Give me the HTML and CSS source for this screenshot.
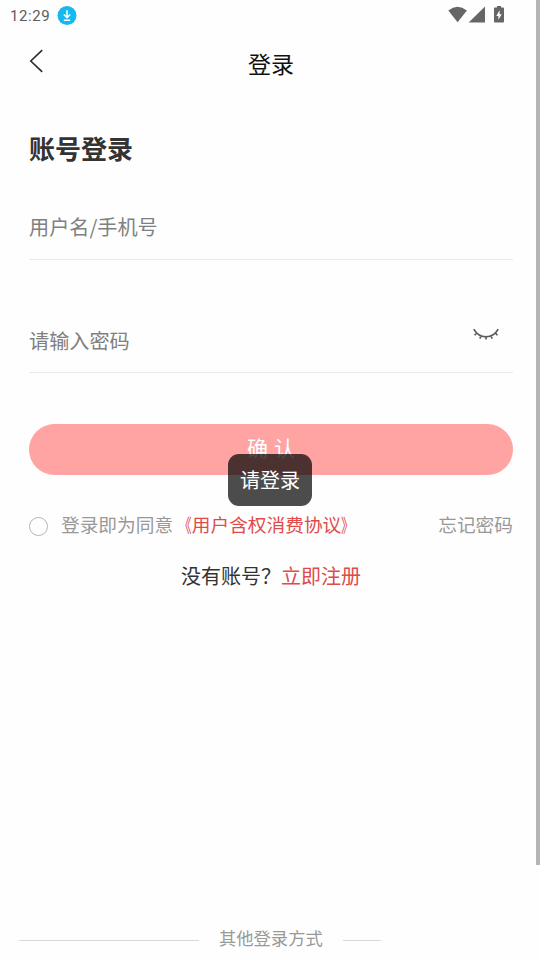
FILE: index.html
```html
<!DOCTYPE html>
<html lang="zh-CN">
<head>
<meta charset="utf-8">
<title>登录</title>
<link rel="stylesheet" href="styles.css">
</head>
<body>
<div class="screen">
  <div class="status">
    <span class="time">12:29</span>
    <svg class="download" width="20" height="20" viewBox="0 0 20 20"><circle cx="10" cy="9.500" r="9.5" fill="#14b9f0"/><path d="M10 4.300v7M6.800 8.500l3.200 3.200L13.200 8.500M6.800 14.200h6.400" fill="none" stroke="#fff" stroke-width="1.6"/></svg>
    <svg class="signals" width="58" height="18" viewBox="0 0 58 18"><g fill="#666"><path d="M0.3 4.4Q9.5-3 18.9 4.4L9.6 16.3z"/><path d="M37 .5V16.6H20.7z"/><path d="M49 0h4v1.5h2.2q.8 0 .8.8v13.5q0 .8-.8.8h-8.4q-.8 0-.8-.8V2.300q0-.8.8-.8H49z"/></g><path d="M51.600 4.300L48.300 9.900H50.400V13.800L53.700 8.200H51.600z" fill="#fff"/></svg>
  </div>
  <header class="nav">
    <svg class="back" width="16" height="24" viewBox="0 0 16 24"><path d="M13.200 1.200L1.800 12 13.200 22.800" fill="none" stroke="#2b2b2b" stroke-width="1.6"/></svg>
    <span class="title">登录</span>
  </header>
  <main class="form">
    <h1>账号登录</h1>
    <div class="field account">用户名/手机号</div>
    <div class="field password"><span>请输入密码</span>
      <svg class="eye" width="28" height="16" viewBox="0 0 28 16"><path d="M1.800 2.200Q6 9.800 14 9.800T26.200 2.200M4.600 6L2.600 8.300M9 8.800L7.900 11.600M14 9.800V12.600M19 8.800L20.100 11.600M23.400 6L25.400 8.300" fill="none" stroke="#5c5c5c" stroke-width="1.7"/></svg>
    </div>
    <div class="submit"><span class="label">确 认</span><div class="toast">请登录</div></div>
    <div class="agreement">
      <span class="radio"></span>
      <span>登录即为同意<span class="link"><span class="open">《</span>用户含权消费协议<span class="close">》</span></span></span>
      <span class="forgot">忘记密码</span>
    </div>
    <div class="register">没有账号？<span class="link">立即注册</span></div>
  </main>
  <footer class="other"><i class="rule"></i><span>其他登录方式</span><i class="rule short"></i></footer>
  <div class="scrollbar"></div>
</div>
</body>
</html>
```
FILE: styles.css
```css
* { box-sizing: border-box; }
body { margin: 0; background: #fefefe; font-family: "Noto Sans CJK SC", sans-serif; color: #333; }
.screen { position: relative; width: 540px; height: 960px; overflow: hidden; display: flex; flex-direction: column; }
.status { height: 32px; display: flex; align-items: flex-start; padding: 6px 34px 0 10px; }
.time { font: 400 15px/20px Roboto, sans-serif; letter-spacing: .6px; color: #5c5c5c; width: 47px; }
.signals { margin-left: auto; }
.nav { height: 62px; display: grid; grid-template-columns: 42px 1fr 40px; align-items: center; }
.back { margin: -4px 0 0 29px; }
.title { text-align: center; font-size: 23px; line-height: 34px; color: #111; }
.form { padding: 0 27px 0 29px; }
h1 { margin: 34px 0 0; font-size: 26px; line-height: 40px; font-weight: 700; }
.field { border-bottom: 1px solid #e9e9e9; font-size: 20.15px; line-height: 30px; color: #808080; }
.account { height: 48px; margin-top: 44px; }
.password { display: flex; justify-content: space-between; height: 47px; margin-top: 66px; }
.eye { margin: 1px 13px 0 0; }
.submit { position: relative; height: 51px; margin-top: 51px; border-radius: 26px; background: #ffa3a3; color: #fff; text-align: center; font-size: 21px; line-height: 46px; }
.label { word-spacing: 1.5px; }
.toast { position: absolute; left: 199px; top: 30px; width: 84px; height: 52px; border-radius: 11px; background: rgba(0, 0, 0, .7); font-size: 20px; line-height: 52px; }
.agreement { display: flex; align-items: center; height: 30px; margin-top: 34px; font-size: 18.7px; line-height: 30px; color: #999; white-space: nowrap; }
.radio { width: 19px; height: 19px; margin: 4px 13px 0 0; border: 1px solid #b5b5b5; border-radius: 50%; }
.link { color: #df4b4b; }
.open, .close { display: inline-block; transform: scaleX(.7); }
.open { transform-origin: right center; }
.close { transform-origin: left center; }
.forgot { margin-left: auto; }
.register { margin-top: 22px; font-size: 20px; line-height: 30px; text-align: center; }
.other { display: flex; align-items: center; height: 30px; margin-top: auto; margin-bottom: 7px; padding-left: 19px; font-size: 17.3px; line-height: 30px; color: #999; }
.rule { width: 180px; height: 1px; margin: 4px 20px 0 0; background: #d8d8d8; }
.short { width: 38px; margin-left: 20px; }
.scrollbar { position: absolute; right: 0; top: 0; width: 4px; height: 865px; background: #b5b5b5; }
```
